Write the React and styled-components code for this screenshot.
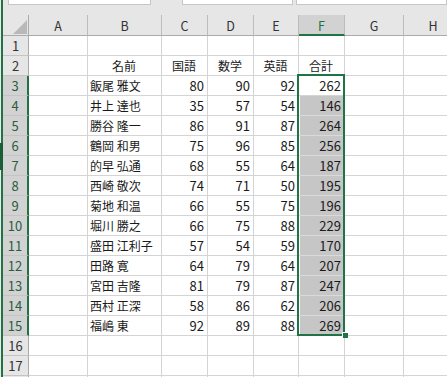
import React from 'react';
import styled, { createGlobalStyle } from 'styled-components';

const GlobalStyle = createGlobalStyle`
  body {
    margin: 0;
    background: #ffffff;
    font-family: "Noto Sans CJK JP", "Noto Sans", sans-serif;
  }
`;

const GREEN = '#217346';

const Window = styled.div`
  position: relative;
  display: flex;
  width: 447px;
  height: 377px;
  overflow: hidden;
  background: #e6e6e6;
`;

const Edge = styled.div`
  width: 1px;
  flex: none;
  background: #e9e9e9;
`;

const Rail = styled.div`
  width: 2px;
  flex: none;
  background: ${GREEN};
`;

const Grip = styled.div`
  position: absolute;
  left: 0;
  top: 143px;
  width: 3px;
  height: 27px;
  background: #1a5e38;
`;

const Main = styled.div`
  flex: 1;
  display: flex;
  flex-direction: column;
  min-width: 0;
`;

const TopBar = styled.div`
  height: 15px;
  flex: none;
  display: flex;
  align-items: flex-start;
  background: #e6e6e6;
`;

const Field = styled.div`
  height: 5px;
  box-sizing: border-box;
  background: #ffffff;
  border: 1px solid #c6c6c6;
  border-top: none;
  margin-left: ${p => p.$gap}px;
  width: ${p => (p.$w ? `${p.$w}px` : 'auto')};
  flex: ${p => (p.$w ? 'none' : '1')};
`;

const SheetWrap = styled.div`
  position: relative;
  flex: 1;
`;

const Sheet = styled.div`
  display: grid;
  grid-template-columns: 26px 59px 74px 46px 46px 45px 46px 59px 59px;
  grid-template-rows: 21px repeat(18, 20px);
  background: #ffffff;
  font-family: "Noto Sans CJK JP", "Noto Sans", sans-serif;
`;

const Corner = styled.div`
  display: flex;
  align-items: flex-end;
  justify-content: flex-end;
  padding: 0 1px 1px 0;
  box-sizing: border-box;
  background: #e6e6e6;
  border-right: 1px solid #ababab;
  border-bottom: 1px solid #ababab;
`;

const ColHead = styled.div`
  display: flex;
  align-items: center;
  justify-content: center;
  box-sizing: border-box;
  padding-top: 1px;
  font-size: 12.5px;
  color: ${p => (p.$on ? GREEN : '#333333')};
  background: ${p => (p.$on ? '#d2d2d2' : '#e6e6e6')};
  border-right: 1px solid #bcbcbc;
  border-bottom: ${p => (p.$on ? `2px solid ${GREEN}` : '1px solid #ababab')};
`;

const RowHead = styled.div`
  display: flex;
  align-items: center;
  justify-content: center;
  box-sizing: border-box;
  font-size: 13px;
  color: ${p => (p.$on ? '#2a5d40' : '#333333')};
  background: ${p => (p.$on ? '#d2d2d2' : '#e6e6e6')};
  border-bottom: 1px solid #c4c4c4;
  border-right: ${p => (p.$on ? `2px solid ${GREEN}` : '1px solid #ababab')};
`;

const Cell = styled.div`
  display: flex;
  align-items: center;
  justify-content: ${p => p.$align || 'flex-start'};
  box-sizing: border-box;
  padding: 0 3px 0 2px;
  font-size: ${p => (p.$num ? '13px' : '12px')};
  color: #1a1a1a;
  white-space: nowrap;
  overflow: hidden;
  background: ${p => (p.$fill ? '#c6c6c6' : '#ffffff')};
  box-shadow: ${p => (p.$fill ? 'inset 1px 0 0 #ffffff' : 'none')};
  border-right: 1px solid #d4d4d4;
  border-bottom: 1px solid ${p => (p.$fill ? '#dadada' : '#d4d4d4')};
`;

const Selection = styled.div`
  position: absolute;
  left: 294px;
  top: 59px;
  width: 48px;
  height: 262px;
  box-sizing: border-box;
  border: 2px solid ${GREEN};
  pointer-events: none;
`;

const Handle = styled.div`
  position: absolute;
  right: -5px;
  bottom: -4px;
  width: 5px;
  height: 5px;
  background: ${GREEN};
  border-left: 1px solid #ffffff;
  border-top: 1px solid #ffffff;
`;

const columns = ['A', 'B', 'C', 'D', 'E', 'F', 'G', 'H'];

const students = [
  ['飯尾 雅文', 80, 90, 92, 262],
  ['井上 達也', 35, 57, 54, 146],
  ['勝谷 隆一', 86, 91, 87, 264],
  ['鶴岡 和男', 75, 96, 85, 256],
  ['的早 弘通', 68, 55, 64, 187],
  ['西崎 敬次', 74, 71, 50, 195],
  ['菊地 和温', 66, 55, 75, 196],
  ['堀川 勝之', 66, 75, 88, 229],
  ['盛田 江利子', 57, 54, 59, 170],
  ['田路 寛', 64, 79, 64, 207],
  ['宮田 吉隆', 81, 79, 87, 247],
  ['西村 正深', 58, 86, 62, 206],
  ['福嶋 東', 92, 89, 88, 269],
];

// builds the cells of one sheet row (A..H)
const rowCells = (r) => {
  if (r === 2) {
    return ['', '名前', '国語', '数学', '英語', '合計', '', ''].map((t, i) => (
      <Cell key={i} $align="center">{t}</Cell>
    ));
  }
  const s = r >= 3 && r <= 15 ? students[r - 3] : null;
  return columns.map((c, i) => {
    if (!s || i === 0 || i > 5) return <Cell key={c} />;
    if (i === 1) return <Cell key={c}>{s[0]}</Cell>;
    return (
      <Cell key={c} $num $align="flex-end" $fill={i === 5 && r > 3}>
        {s[i - 1]}
      </Cell>
    );
  });
};

export default function App() {
  const rows = Array.from({ length: 18 }, (_, i) => i + 1);
  return (
    <>
      <GlobalStyle />
      <Window>
        <Edge />
        <Rail />
        <Grip />
        <Main>
          <TopBar>
            <Field $gap={5} $w={143} />
            <Field $gap={31} $w={111} />
            <Field $gap={3} />
          </TopBar>
          <SheetWrap>
            <Sheet>
              <Corner>
                <svg width="14" height="14" viewBox="0 0 14 14">
                  <polygon points="14,0 14,14 0,14" fill="#b9b9b9" />
                </svg>
              </Corner>
              {columns.map(c => (
                <ColHead key={c} $on={c === 'F'}>{c}</ColHead>
              ))}
              {rows.map(r => (
                <React.Fragment key={r}>
                  <RowHead $on={r >= 3 && r <= 15}>{r < 18 ? r : ''}</RowHead>
                  {rowCells(r)}
                </React.Fragment>
              ))}
            </Sheet>
            <Selection>
              <Handle />
            </Selection>
          </SheetWrap>
        </Main>
      </Window>
    </>
  );
}
